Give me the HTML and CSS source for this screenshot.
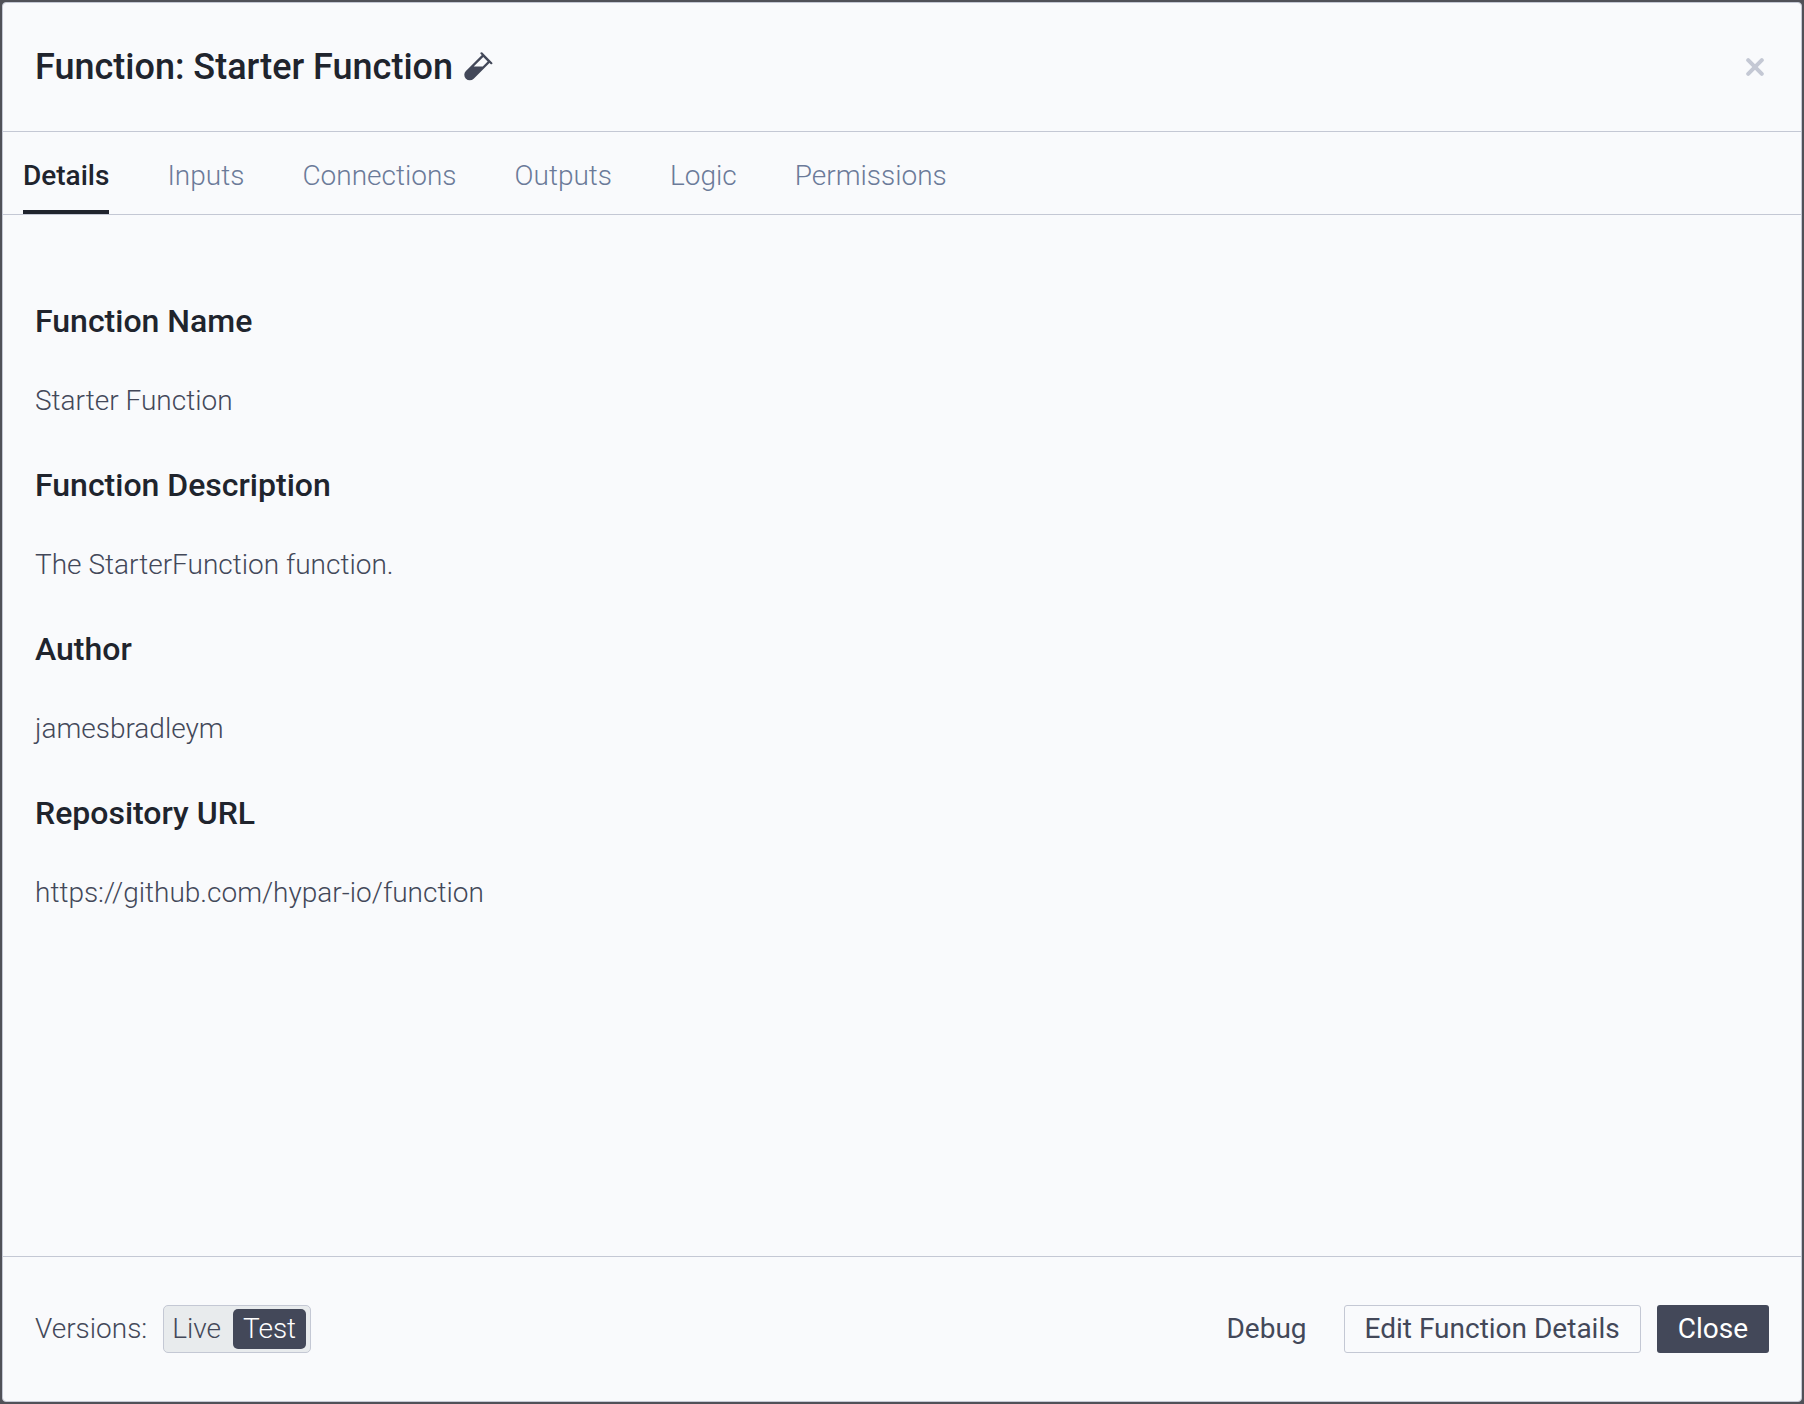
FILE: index.html
```html
<!DOCTYPE html>
<html lang="en">
<head>
<meta charset="utf-8">
<title>Function: Starter Function</title>
<link rel="stylesheet" href="styles.css">
</head>
<body>
<main class="dialog">
  <header class="dialog-header">
    <h1 class="dialog-title">Function: Starter Function</h1>
    <svg class="vial" viewBox="0 0 30 30" aria-hidden="true">
      <path fill="currentColor" fill-rule="evenodd" d="M19.400 2.400 2.900 18.900A5.500 5.500 0 0 0 10.700 26.700L27.200 10.200ZM20.300 4.900 10.700 14.500H19.700L24.700 9.500Z"/>
      <path d="M18.500 1.300 28.300 11.200" stroke="currentColor" stroke-width="2.200" stroke-linecap="round"/>
    </svg>
    <button class="dismiss" type="button" aria-label="Close dialog">
      <svg class="dismiss-icon" viewBox="0 0 18 18" aria-hidden="true"><path d="M2.200 2.200 15.800 15.800M15.800 2.200 2.200 15.800" stroke="currentColor" stroke-width="4" stroke-linecap="round"/></svg>
    </button>
  </header>
  <nav class="tabs">
    <a class="tab tab-active" href="#details">Details</a>
    <a class="tab" href="#inputs">Inputs</a>
    <a class="tab" href="#connections">Connections</a>
    <a class="tab" href="#outputs">Outputs</a>
    <a class="tab" href="#logic">Logic</a>
    <a class="tab" href="#permissions">Permissions</a>
  </nav>
  <section class="details" id="details">
    <h2 class="field-name">Function Name</h2>
    <p class="field-value">Starter Function</p>
    <h2 class="field-name">Function Description</h2>
    <p class="field-value">The StarterFunction function.</p>
    <h2 class="field-name">Author</h2>
    <p class="field-value">jamesbradleym</p>
    <h2 class="field-name">Repository URL</h2>
    <p class="field-value">https://github.com/hypar-io/function</p>
  </section>
  <footer class="dialog-footer">
    <span class="versions-label" id="versions">Versions:</span>
    <div class="switch" role="group" aria-labelledby="versions">
      <button class="switch-option" type="button" aria-pressed="false">Live</button>
      <button class="switch-option switch-selected" type="button" aria-pressed="true">Test</button>
    </div>
    <div class="actions">
      <button class="button button-plain" type="button">Debug</button>
      <button class="button button-outline" type="button">Edit Function Details</button>
      <button class="button button-solid" type="button">Close</button>
    </div>
  </footer>
</main>
</body>
</html>
```
FILE: styles.css
```css
* { box-sizing: border-box; }
body {
  margin: 0;
  padding: 2px;
  min-height: 100vh;
  display: flex;
  background: #505158;
  font: 300 28px/32px Roboto, sans-serif;
  color: #434859;
}
button { font: inherit; color: inherit; cursor: pointer; }
.dialog {
  flex: 1;
  display: flex;
  flex-direction: column;
  background: #f9fafc;
  border: 1px solid #c4c8d4;
  border-radius: 4px;
}
.dialog-header {
  display: flex;
  align-items: center;
  height: 129px;
  padding: 0 32px;
  border-bottom: 1px solid #c4c8d4;
}
.dialog-title {
  margin: 0;
  font-size: 36px;
  line-height: 44px;
  font-weight: 500;
  color: #20242d;
}
.vial { width: 30px; height: 30px; margin-left: 10px; }
.dismiss {
  display: flex;
  margin-left: auto;
  padding: 5px;
  border: 0;
  background: none;
  color: #c4c8d4;
}
.dismiss-icon { width: 18px; height: 18px; }
.tabs {
  display: flex;
  gap: 58px;
  height: 83px;
  padding: 0 20px;
  border-bottom: 1px solid #c4c8d4;
}
.tab {
  padding-top: 28px;
  border-bottom: 4px solid transparent;
  color: #6b7a99;
  text-decoration: none;
}
.tab-active { color: #20242d; font-weight: 500; border-color: #20242d; }
.details { flex: 1; padding: 88px 32px 0; }
.field-name {
  margin: 0 0 46px;
  font-size: 32px;
  line-height: 36px;
  font-weight: 500;
  color: #20242d;
}
.field-value { margin: 0 0 50px; }
.dialog-footer {
  display: flex;
  align-items: center;
  height: 145px;
  padding: 0 32px;
  border-top: 1px solid #c4c8d4;
}
.switch {
  display: flex;
  height: 48px;
  margin-left: 16px;
  padding: 3px 4px;
  border: 1px solid #c4c8d4;
  border-radius: 5px;
  background: #e8ebed;
}
.switch-option {
  padding: 0 12px 0 4px;
  border: 0;
  border-radius: 5px;
  background: none;
}
.switch-selected { padding: 0 10px; background: #434859; color: #fff; }
.actions { display: flex; gap: 16px; margin-left: auto; }
.button {
  height: 48px;
  padding: 0 20px;
  border: 1px solid transparent;
  border-radius: 3px;
  background: none;
  font-weight: 400;
}
.button-outline { border-color: #c4c8d4; }
.button-solid { background: #434859; color: #fff; }
```
